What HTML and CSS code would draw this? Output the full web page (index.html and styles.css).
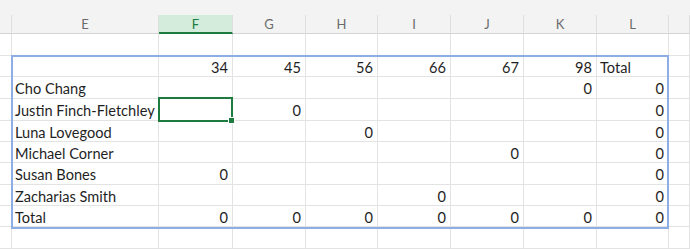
FILE: index.html
```html
<!DOCTYPE html>
<html lang="en">
<head>
  <meta charset="UTF-8">
  <meta name="viewport" content="width=device-width, initial-scale=1.0">
  <title>Pivot</title>
  <link rel="stylesheet" href="styles.css">
</head>
<body>
  <div class="sheet">
    <div class="topbar"></div>

    <div class="row heads">
      <div class="h"></div>
      <div class="h">E</div>
      <div class="h active">F</div>
      <div class="h">G</div>
      <div class="h">H</div>
      <div class="h">I</div>
      <div class="h">J</div>
      <div class="h">K</div>
      <div class="h">L</div>
      <div class="h"></div>
    </div>

    <div class="row tall">
      <div></div><div></div><div></div><div></div><div></div><div></div><div></div><div></div><div></div><div></div>
    </div>

    <div class="row">
      <div></div><div></div>
      <div class="n">34</div><div class="n">45</div><div class="n">56</div><div class="n">66</div><div class="n">67</div><div class="n">98</div>
      <div class="t">Total</div><div></div>
    </div>

    <div class="row tall">
      <div></div><div class="t">Cho Chang</div>
      <div></div><div></div><div></div><div></div><div></div><div class="n">0</div>
      <div class="n">0</div><div></div>
    </div>

    <div class="row tall">
      <div></div><div class="t">Justin Finch-Fletchley</div>
      <div></div><div class="n">0</div><div></div><div></div><div></div><div></div>
      <div class="n">0</div><div></div>
    </div>

    <div class="row">
      <div></div><div class="t">Luna Lovegood</div>
      <div></div><div></div><div class="n">0</div><div></div><div></div><div></div>
      <div class="n">0</div><div></div>
    </div>

    <div class="row">
      <div></div><div class="t">Michael Corner</div>
      <div></div><div></div><div></div><div></div><div class="n">0</div><div></div>
      <div class="n">0</div><div></div>
    </div>

    <div class="row tall">
      <div></div><div class="t">Susan Bones</div>
      <div class="n">0</div><div></div><div></div><div></div><div></div><div></div>
      <div class="n">0</div><div></div>
    </div>

    <div class="row">
      <div></div><div class="t">Zacharias Smith</div>
      <div></div><div></div><div></div><div class="n">0</div><div></div><div></div>
      <div class="n">0</div><div></div>
    </div>

    <div class="row">
      <div></div><div class="t">Total</div>
      <div class="n">0</div><div class="n">0</div><div class="n">0</div><div class="n">0</div><div class="n">0</div><div class="n">0</div>
      <div class="n">0</div><div></div>
    </div>

    <div class="row tall">
      <div></div><div></div><div></div><div></div><div></div><div></div><div></div><div></div><div></div><div></div>
    </div>

    <!-- selected range and active cell -->
    <div class="range"></div>
    <div class="cursor"><span class="handle"></span></div>
  </div>
</body>
</html>
```

FILE: styles.css
```css
body {
  margin: 0;
  background: #fff;
  font-family: Lato, "Liberation Sans", sans-serif;
  color: #1f1f1f;
}

.sheet {
  position: relative;
  width: 690px;
  height: 249px;
  overflow: hidden;
}

.topbar {
  height: 15px;
  background: #f3f3f3;
}

.row {
  display: grid;
  grid-template-columns: 12px 147px 74px 73px 72px 73px 73px 73px 72px 1fr;
  height: 21px;
}
.row.tall {
  height: 22px;
}
.row > div {
  box-sizing: border-box;
  border-right: 1px solid #e3e3e3;
  border-bottom: 1px solid #e3e3e3;
  font-size: 14.6px;
  line-height: 21px;
  padding: 1px 3px 0;
  white-space: nowrap;
  overflow: hidden;
}
.row .n {
  text-align: right;
  padding-right: 4px;
}

.row.heads {
  height: 19px;
  background: #f3f3f3;
}
.row.heads .h {
  border-right-color: #dedede;
  border-bottom-color: #d4d4d4;
  padding-top: 0;
  font-size: 13px;
  line-height: 19px;
  text-align: center;
  color: #6b6b6b;
}
.row.heads .h.active {
  background: #d3ecdb;
  color: #1e7b40;
  border-bottom: 2px solid #1e7b40;
  line-height: 18px;
}

.range {
  position: absolute;
  left: 11px;
  top: 55px;
  width: 658px;
  height: 174px;
  box-sizing: border-box;
  border: 2px solid #8caee5;
}

.cursor {
  position: absolute;
  left: 158px;
  top: 97px;
  width: 75px;
  height: 25px;
  box-sizing: border-box;
  border: 2px solid #1e7b40;
}
.handle {
  position: absolute;
  right: -4px;
  bottom: -4px;
  width: 5px;
  height: 5px;
  background: #1e7b40;
  border: 1px solid #fff;
}
```
